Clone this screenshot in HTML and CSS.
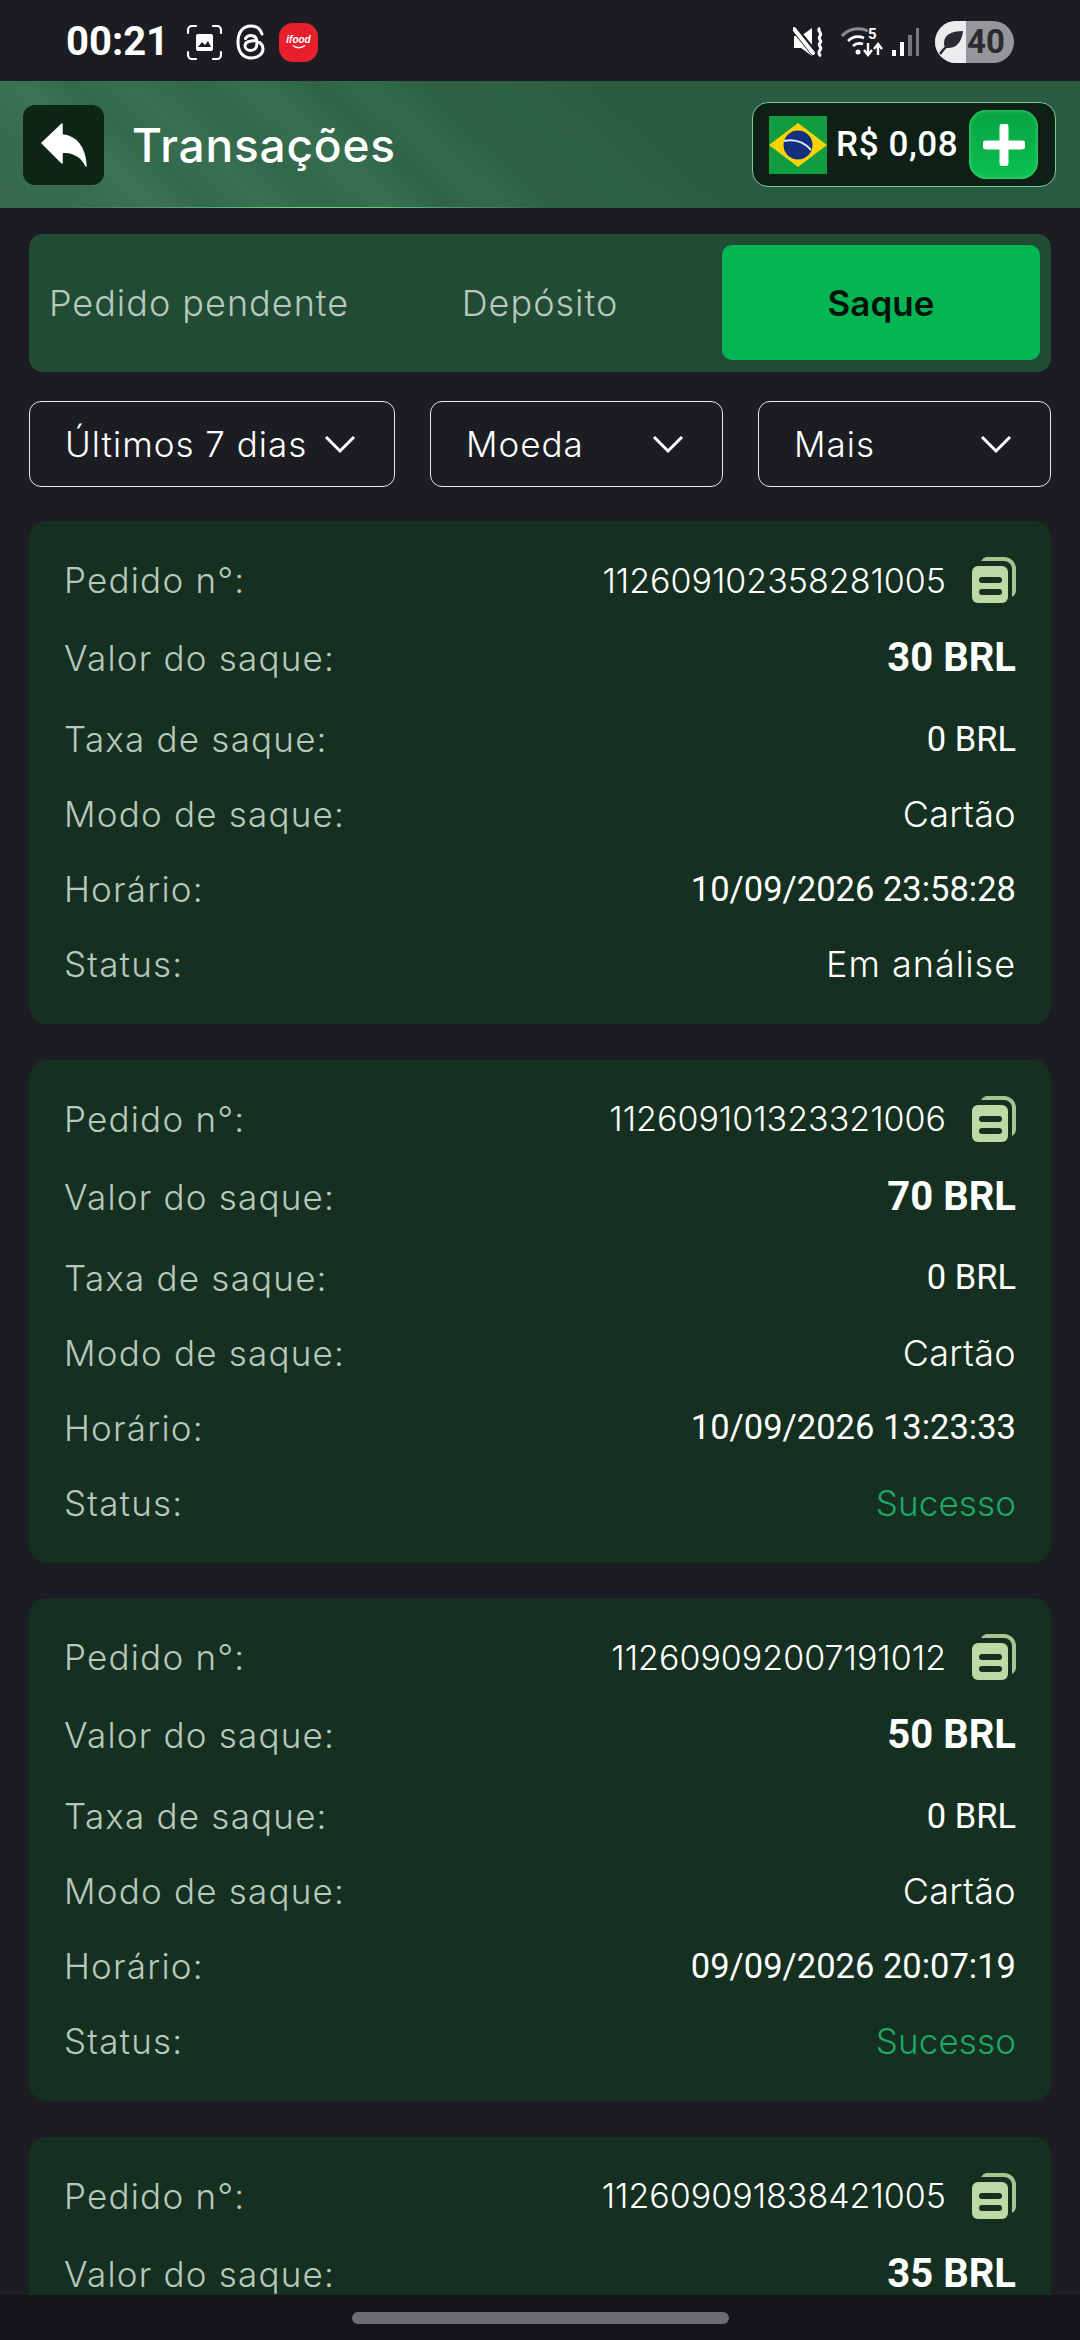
FILE: index.html
```html
<!DOCTYPE html>
<html lang="pt">
<head>
<meta charset="utf-8">
<title>Transações</title>
<link rel="stylesheet" href="styles.css">
</head>
<body>
<div class="status">
  <div class="status-left">
    <span class="clock">00:21</span>
    <svg class="ic-shot" viewBox="0 0 35 35"><path d="M9 1H5a4 4 0 0 0-4 4v3M26 1h4a4 4 0 0 1 4 4v3M1 27v3a4 4 0 0 0 4 4h4M34 27v3a4 4 0 0 1-4 4h-4" fill="none" stroke="#fff" stroke-width="2.2" stroke-linecap="round"/><path d="M11 9h13a2 2 0 0 1 2 2v13a2 2 0 0 1-2 2H11a2 2 0 0 1-2-2V11a2 2 0 0 1 2-2z" fill="#fff"/><path d="M11 22l4-5 3 3 3-4 3 6z" fill="#1c1d22"/></svg>
    <svg class="ic-threads" viewBox="0 0 30 36"><path d="M26 10C24 4 20 2 15 2 7 2 2 8 2 18s5 16 13 16c7 0 12-4 12-9 0-6-6-9-12-8-4 .5-6 2.500-6 5s2.500 4.500 5.500 4.500c4 0 6.500-3 6.500-7.500 0-5-2.500-7.500-6-7.500-2.500 0-4.500 1-5.500 3" fill="none" stroke="#fff" stroke-width="3" stroke-linecap="round"/></svg>
    <span class="ifood"><span class="ifood-name">ifood</span><svg class="ifood-smile" viewBox="0 0 14 4"><path d="M1 .5c3 3 8 3 12 0" fill="none" stroke="#fff" stroke-width="1.300"/></svg></span>
  </div>
  <div class="status-right">
    <svg class="ic-mute" viewBox="0 0 32 32"><path d="M1 10h7l11-8v28L8 22H1z" fill="#fff"/><path d="M0 1l22 27" stroke="#1c1d22" stroke-width="7"/><path d="M1 3l19 24" stroke="#fff" stroke-width="4" stroke-linecap="round"/><path d="M27 2c-4 3 3 5 0 8s3 5 0 7 3 5 0 7c-2 2-1 5 1 6" fill="none" stroke="#fff" stroke-width="3"/></svg>
    <svg class="ic-wifi" viewBox="0 0 42 34"><path d="M1 11C8 3 19 2 27 6" fill="none" stroke="#8c8c8e" stroke-width="3"/><path d="M7 16c5-5 11-5 16-3M12 21c3-3 7-3 10-2" fill="none" stroke="#fff" stroke-width="2.600"/><circle cx="17" cy="27" r="2.500" fill="#fff"/><path d="M27 18v12M23 25l4 5 4-5M37 30V19M33 24l4-5 4 5" fill="none" stroke="#fff" stroke-width="2.400"/><text class="wifi-five" x="27" y="14">5</text></svg>
    <svg class="ic-signal" viewBox="0 0 28 30"><rect x="0" y="23" width="4" height="6" fill="#fff"/><rect x="8" y="15" width="4" height="14" fill="#fff"/><rect x="16" y="8" width="4" height="21" fill="#77787a"/><rect x="24" y="1" width="3" height="28" fill="#77787a"/></svg>
    <div class="battery">
      <span class="battery-fill"><svg class="ic-leaf" viewBox="0 0 26 26"><path d="M24 2C12 2 5 6 5 14c0 2 .5 4 2 5 9 1 16-5 17-17z" fill="#2a2b2e"/><path d="M1 25C5 19 10 15 16 11" stroke="#2a2b2e" stroke-width="2.500" fill="none"/></svg></span>
      <span class="battery-num">40</span>
    </div>
  </div>
</div>

<header class="topbar">
  <div class="topbar-left">
    <div class="back">
      <svg class="ic-back" viewBox="0 0 46 44"><path d="M21 1v11c14 1 23 12 24 31-4-9-12-14-24-14v11L1 20z" fill="#fff" stroke="#fff" stroke-linejoin="round" stroke-width="1.500"/></svg>
    </div>
    <h1 class="title">Transações</h1>
  </div>
  <div class="balance">
    <svg class="flag" viewBox="0 0 58 58"><rect width="58" height="58" fill="#0f9d3f"/><path d="M29 7l29 22-29 22L0 29z" fill="#fbd305"/><circle cx="29" cy="29" r="14.500" fill="#13307f"/><path d="M15 25c10-2 20 1 27 9" stroke="#dfe6f0" stroke-width="2" fill="none"/></svg>
    <span class="amount">R$ 0,08</span>
    <div class="plus"><svg class="ic-plus" viewBox="0 0 42 42"><path d="M21 3v36M3 21h36" stroke="#fff" stroke-width="9" stroke-linecap="round"/></svg></div>
  </div>
</header>

<main class="content">
  <div class="tabs">
    <div class="tab tab-first">Pedido pendente</div>
    <div class="tab">Depósito</div>
    <div class="tab tab-active">Saque</div>
  </div>

  <div class="filters">
    <div class="filter filter-wide"><span>Últimos 7 dias</span><svg class="chev" viewBox="0 0 32 20"><path d="M2 3l14 14L30 3" fill="none" stroke="#fff" stroke-width="3"/></svg></div>
    <div class="filter"><span>Moeda</span><svg class="chev" viewBox="0 0 32 20"><path d="M2 3l14 14L30 3" fill="none" stroke="#fff" stroke-width="3"/></svg></div>
    <div class="filter"><span>Mais</span><svg class="chev" viewBox="0 0 32 20"><path d="M2 3l14 14L30 3" fill="none" stroke="#fff" stroke-width="3"/></svg></div>
  </div>

  <section class="card">
    <div class="row"><span class="label">Pedido n°:</span><span class="order">112609102358281005<svg class="copy" viewBox="0 0 44 46"><use href="#copy-icon"/></svg></span></div>
    <div class="row row-amount"><span class="label">Valor do saque:</span><span class="value-big">30 BRL</span></div>
    <div class="row"><span class="label">Taxa de saque:</span><span class="value">0 BRL</span></div>
    <div class="row"><span class="label">Modo de saque:</span><span class="text-value">Cartão</span></div>
    <div class="row"><span class="label">Horário:</span><span class="value">10/09/2026 23:58:28</span></div>
    <div class="row"><span class="label">Status:</span><span class="text-value pending">Em análise</span></div>
  </section>

  <section class="card">
    <div class="row"><span class="label">Pedido n°:</span><span class="order">112609101323321006<svg class="copy" viewBox="0 0 44 46"><use href="#copy-icon"/></svg></span></div>
    <div class="row row-amount"><span class="label">Valor do saque:</span><span class="value-big">70 BRL</span></div>
    <div class="row"><span class="label">Taxa de saque:</span><span class="value">0 BRL</span></div>
    <div class="row"><span class="label">Modo de saque:</span><span class="text-value">Cartão</span></div>
    <div class="row"><span class="label">Horário:</span><span class="value">10/09/2026 13:23:33</span></div>
    <div class="row"><span class="label">Status:</span><span class="text-value success">Sucesso</span></div>
  </section>

  <section class="card">
    <div class="row"><span class="label">Pedido n°:</span><span class="order">112609092007191012<svg class="copy" viewBox="0 0 44 46"><use href="#copy-icon"/></svg></span></div>
    <div class="row row-amount"><span class="label">Valor do saque:</span><span class="value-big">50 BRL</span></div>
    <div class="row"><span class="label">Taxa de saque:</span><span class="value">0 BRL</span></div>
    <div class="row"><span class="label">Modo de saque:</span><span class="text-value">Cartão</span></div>
    <div class="row"><span class="label">Horário:</span><span class="value">09/09/2026 20:07:19</span></div>
    <div class="row"><span class="label">Status:</span><span class="text-value success">Sucesso</span></div>
  </section>

  <section class="card">
    <div class="row"><span class="label">Pedido n°:</span><span class="order">112609091838421005<svg class="copy" viewBox="0 0 44 46"><use href="#copy-icon"/></svg></span></div>
    <div class="row row-amount"><span class="label">Valor do saque:</span><span class="value-big">35 BRL</span></div>
  </section>
</main>

<div class="navbar"><span class="home-pill"></span></div>

<svg class="defs" width="0" height="0" aria-hidden="true">
  <symbol id="copy-icon" viewBox="0 0 44 46">
    <path d="M14 0h18a12 12 0 0 1 12 12v21a8 8 0 0 1-4 7V12a8 8 0 0 0-8-8H9a8 8 0 0 1 5-4z" fill="#a6c593"/>
    <rect x="0" y="9" width="36" height="37" rx="6" fill="#bcd9a6"/>
    <rect x="7" y="20" width="23" height="6" rx="3" fill="#16301f"/>
    <rect x="7" y="32" width="23" height="6" rx="3" fill="#16301f"/>
  </symbol>
</svg>
</body>
</html>
```

FILE: styles.css
```css
* { box-sizing: border-box; }
html, body { margin: 0; padding: 0; }
body {
  width: 1080px;
  height: 2340px;
  overflow: hidden;
  display: flex;
  flex-direction: column;
  background: #1c1d22;
  color: #fff;
  font-family: Inter, "Liberation Sans", sans-serif;
}

/* status bar */
.status {
  height: 81px;
  flex: none;
  display: flex;
  justify-content: space-between;
  align-items: center;
  padding: 3px 66px 0 66px;
}
.status-left, .status-right { display: flex; align-items: center; }
.clock { font: 700 40px/1 Roboto, sans-serif; width: 121px; }
.ic-shot { width: 35px; height: 35px; margin-right: 14px; }
.ic-threads { width: 30px; height: 36px; margin-right: 13px; }
.ifood {
  width: 39px;
  height: 39px;
  border-radius: 14px;
  background: #e8202e;
  display: flex;
  flex-direction: column;
  align-items: center;
  justify-content: center;
}
.ifood-name { font: italic 700 10px/1 "Liberation Sans", sans-serif; color: #fff; }
.ifood-smile { width: 14px; height: 4px; }
.ic-mute { width: 32px; height: 32px; margin-right: 16px; }
.ic-wifi { width: 42px; height: 34px; margin-right: 9px; }
.wifi-five { font: 700 15px Roboto, sans-serif; fill: #fff; }
.ic-signal { width: 28px; height: 30px; margin-right: 15px; }
.battery {
  width: 79px;
  height: 42px;
  border-radius: 21px;
  overflow: hidden;
  display: flex;
  background: #97979b;
  position: relative;
}
.battery-fill {
  width: 31px;
  background: #ececee;
  display: flex;
  align-items: center;
  padding-left: 4px;
}
.ic-leaf { width: 26px; height: 26px; flex: none; }
.battery-num { font: 700 33px/42px Roboto, sans-serif; color: #2a2b2e; margin-left: 1px; }

/* top bar */
.topbar {
  height: 127px;
  flex: none;
  display: flex;
  justify-content: space-between;
  align-items: center;
  padding: 0 24px 0 23px;
  background:
    linear-gradient(90deg, transparent 60px, #6fd08f 300px, #6fd08f 350px, transparent 540px) bottom / 100% 1px no-repeat,
    linear-gradient(42deg,
      #37694d 0, #366d4e 8%, #3c7355 13%, #346a4c 17%, #397052 22%,
      #32674a 27%, #377050 32%, #2f6348 37%, #336a4c 41%, #2c5f43 47%,
      #2e6246 52%, #2a5c41 60%, #2a5c41 100%);
}
.topbar-left { display: flex; align-items: center; }
.back {
  width: 81px;
  height: 80px;
  border-radius: 12px;
  background: #0d2616;
  display: flex;
  align-items: center;
  justify-content: center;
  margin-right: 28px;
}
.ic-back { width: 46px; height: 44px; }
.title { margin: 0; font-size: 46px; font-weight: 500; letter-spacing: .8px; color: #fff; }
.balance {
  width: 304px;
  height: 85px;
  border: 1.5px solid #74cf93;
  border-radius: 16px;
  background: #0e2015;
  display: flex;
  align-items: center;
  padding-left: 16px;
}
.flag { width: 58px; height: 58px; flex: none; margin-right: 9px; }
.amount { font: 500 35px/1 Roboto, sans-serif; width: 133px; letter-spacing: .6px; flex: none; white-space: nowrap; }
.plus {
  width: 69px;
  height: 69px;
  border-radius: 17px;
  background: linear-gradient(#07a341, #0ac04f);
  box-shadow: inset 0 0 4px #4fdc83;
  display: flex;
  align-items: center;
  justify-content: center;
}
.ic-plus { width: 42px; height: 42px; }

/* content */
.content {
  flex: 1;
  min-height: 0;
  overflow: hidden;
  padding: 26px 29px 0;
}
.tabs {
  height: 138px;
  padding: 11px;
  border-radius: 14px;
  background: #224b36;
  display: grid;
  grid-template-columns: repeat(3, 318px);
  column-gap: 23px;
}
.tab {
  height: 115px;
  display: flex;
  align-items: center;
  justify-content: center;
  font-size: 36px;
  font-weight: 300;
  letter-spacing: 1px;
  color: #b6c9bc;
  white-space: nowrap;
}
.tab-active {
  background: #03b653;
  border-radius: 10px;
  color: #04130a;
  font-size: 35px;
  font-weight: 600;
  letter-spacing: 0;
}
.filters {
  display: flex;
  gap: 35px;
  margin-top: 29px;
}
.filter {
  flex: 0 0 293px;
  height: 86px;
  border: 1.5px solid #e4e6e4;
  border-radius: 12px;
  display: flex;
  align-items: center;
  justify-content: space-between;
  padding: 0 38px 0 35px;
  font-size: 35px;
  font-weight: 300;
  letter-spacing: 1px;
  white-space: nowrap;
}
.filter-wide { flex-basis: 366px; }
.chev { width: 32px; height: 20px; flex: none; }

.card {
  height: 503px;
  margin-top: 35.5px;
  padding: 39px 35px 0;
  border-radius: 18px;
  background: #152f20;
}
.filters + .card { margin-top: 34px; }
.row {
  height: 40px;
  margin-top: 35px;
  display: flex;
  justify-content: space-between;
  align-items: center;
  white-space: nowrap;
}
.row:first-child { margin-top: 0; }
.row-amount { margin-top: 38px; margin-bottom: 41px; }
.row-amount + .row { margin-top: 0; }
.label { font-size: 35px; font-weight: 300; color: #b7c8bc; letter-spacing: 1.2px; }
.order {
  display: flex;
  align-items: center;
  font-size: 34px;
  font-weight: 300;
}
.copy { width: 44px; height: 46px; margin-left: 26px; flex: none; }
.value { font: 400 34.500px/1 Roboto, sans-serif; }
.value-big { font: 700 40px/1 Roboto, sans-serif; }
.text-value { font-size: 36px; font-weight: 300; letter-spacing: .3px; }
.pending { letter-spacing: 1px; }
.success { color: #1fa866; font-size: 35px; letter-spacing: .1px; }

/* nav */
.navbar {
  height: 45px;
  flex: none;
  background: #14151a;
  display: flex;
  justify-content: center;
  padding-top: 17px;
}
.home-pill {
  width: 377px;
  height: 12px;
  border-radius: 6px;
  background: #6c6d70;
}
.defs { position: absolute; }
```
